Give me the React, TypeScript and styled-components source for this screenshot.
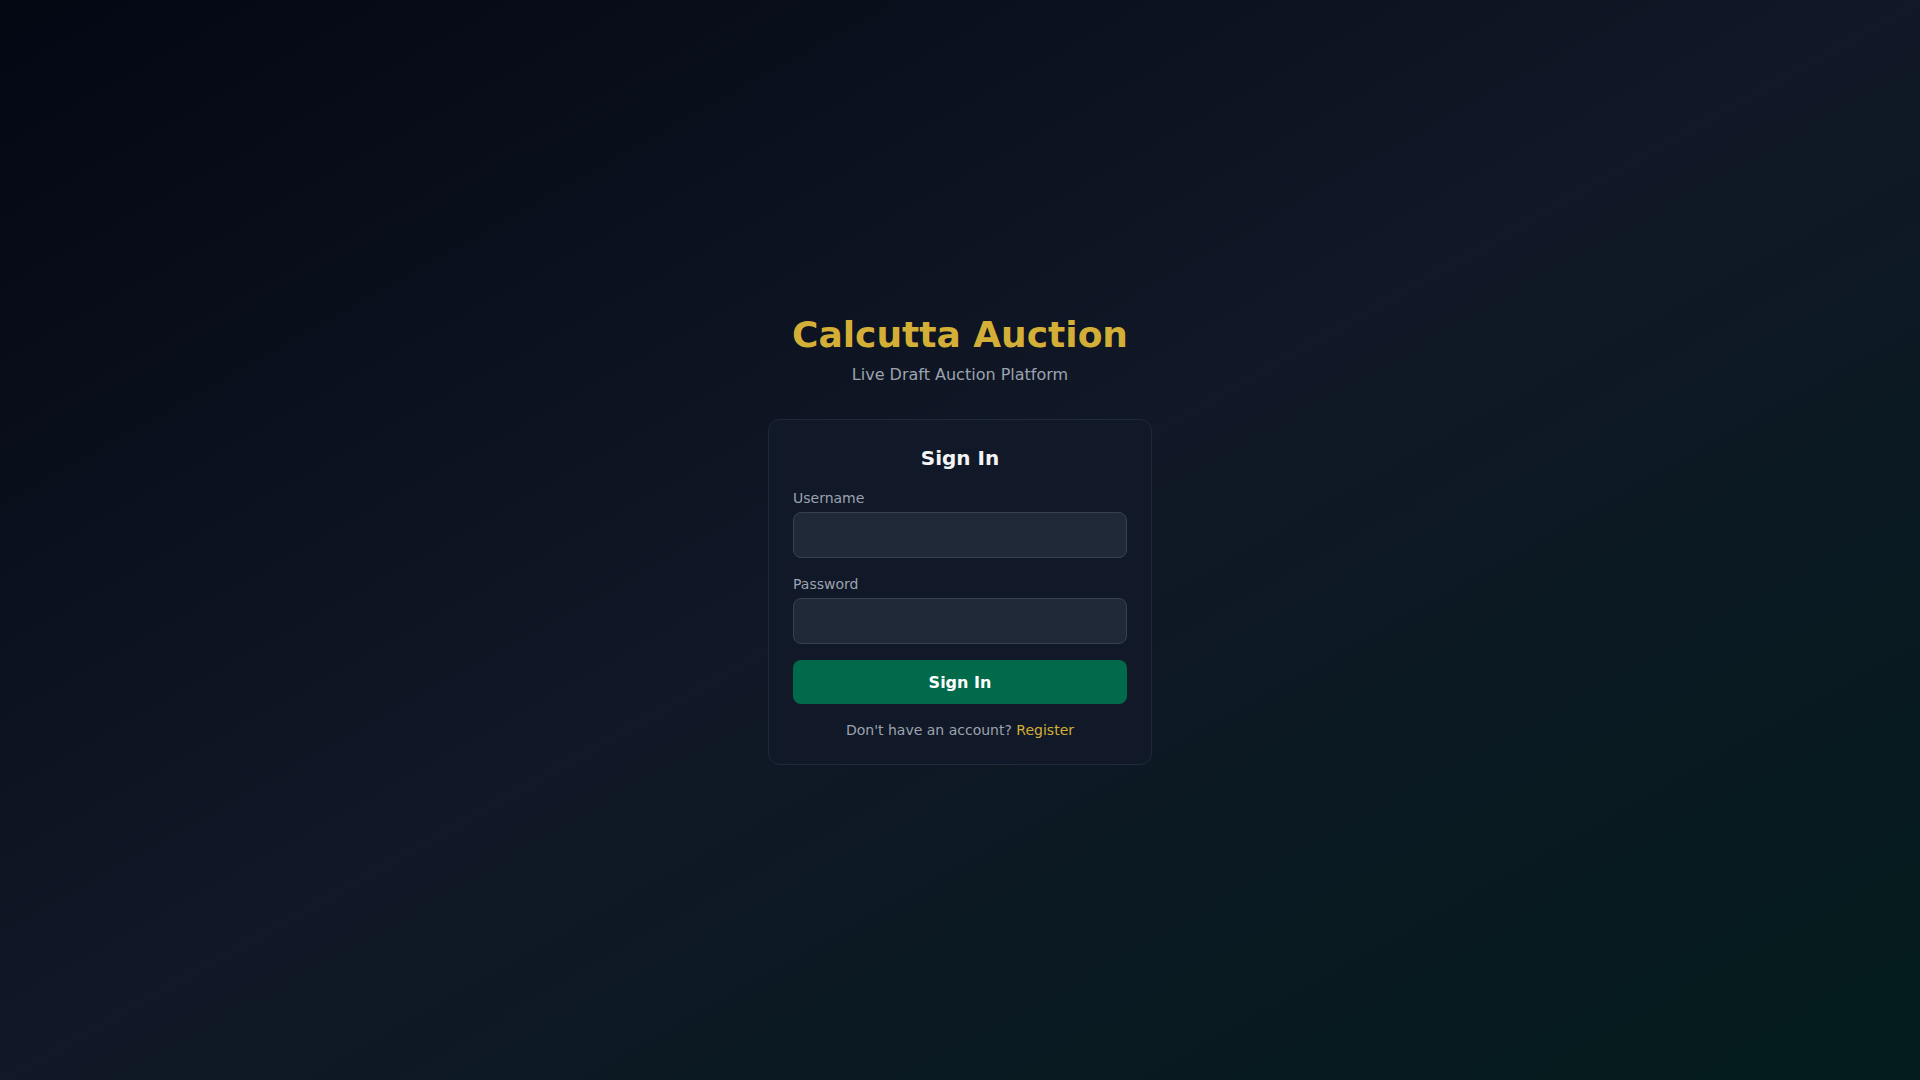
import React from "react";
import styled, { createGlobalStyle } from "styled-components";

const GlobalStyle = createGlobalStyle`
  *, *::before, *::after { box-sizing: border-box; }
  html, body { margin: 0; padding: 0; }
  body {
    font-family: "DejaVu Sans", "Noto Sans", sans-serif;
    background: #030712;
  }
`;

const Page = styled.div`
  min-height: 100vh;
  display: flex;
  align-items: center;
  justify-content: center;
  padding: 16px;
  background: linear-gradient(to bottom right, #030712 0%, #111827 50%, #031c1c 100%);
`;

const Column = styled.div`
  width: 100%;
  max-width: 384px;
  display: flex;
  flex-direction: column;
  align-items: stretch;
`;

const Header = styled.div`
  text-align: center;
  margin-bottom: 32px;
`;

const Title = styled.h1`
  margin: 0;
  font-size: 36px;
  line-height: 40px;
  font-weight: 700;
  color: #d4af37;
`;

const Subtitle = styled.p`
  margin: 8px 0 0;
  font-size: 16px;
  line-height: 24px;
  color: #9ca3af;
`;

const Card = styled.form`
  background: #111827;
  border: 1px solid #1f2937;
  border-radius: 12px;
  padding: 24px;
  display: flex;
  flex-direction: column;
  gap: 16px;
`;

const CardTitle = styled.h2`
  margin: 0;
  text-align: center;
  font-size: 20px;
  line-height: 28px;
  font-weight: 700;
  color: #f3f4f6;
`;

const Field = styled.div`
  display: flex;
  flex-direction: column;
  gap: 4px;
`;

const Label = styled.label`
  font-size: 14px;
  line-height: 20px;
  color: #9ca3af;
`;

const Input = styled.input`
  height: 46px;
  width: 100%;
  padding: 10px 16px;
  background: #1f2937;
  border: 1px solid #374151;
  border-radius: 8px;
  color: #f3f4f6;
  font-family: inherit;
  font-size: 16px;
  outline: none;
`;

const SubmitButton = styled.button`
  height: 44px;
  width: 100%;
  border: none;
  border-radius: 8px;
  background: #006a4a;
  color: #ffffff;
  font-family: inherit;
  font-size: 16px;
  font-weight: 700;
  cursor: pointer;
`;

const Footer = styled.p`
  margin: 0;
  text-align: center;
  font-size: 14px;
  line-height: 20px;
  color: #9ca3af;
`;

const Link = styled.a`
  color: #d4af37;
  text-decoration: none;
`;

export default function App() {
  return (
    <>
      <GlobalStyle />
      <Page>
        <Column>
          <Header>
            <Title>Calcutta Auction</Title>
            <Subtitle>Live Draft Auction Platform</Subtitle>
          </Header>
          <Card onSubmit={(e) => e.preventDefault()}>
            <CardTitle>Sign In</CardTitle>
            <Field>
              <Label htmlFor="username">Username</Label>
              <Input id="username" type="text" />
            </Field>
            <Field>
              <Label htmlFor="password">Password</Label>
              <Input id="password" type="password" />
            </Field>
            <SubmitButton type="submit">Sign In</SubmitButton>
            <Footer>
              Don't have an account? <Link href="#">Register</Link>
            </Footer>
          </Card>
        </Column>
      </Page>
    </>
  );
}
